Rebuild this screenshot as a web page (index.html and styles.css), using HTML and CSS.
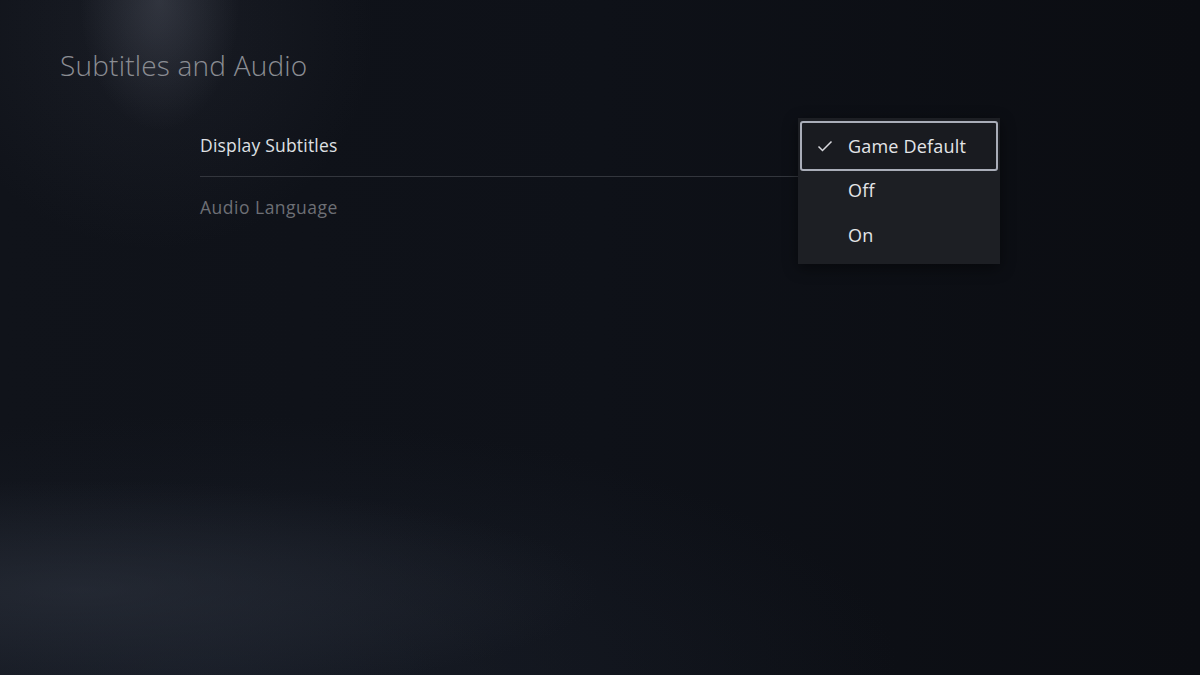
FILE: index.html
```html
<!DOCTYPE html>
<html lang="en">
<head>
    <meta charset="UTF-8">
    <meta name="viewport" content="width=device-width, initial-scale=1.0">
    <title>Subtitles and Audio</title>
    <link rel="stylesheet" href="styles.css">
</head>
<body>
    <div class="screen">
        <h1 class="page-title">Subtitles and Audio</h1>

        <div class="settings-list">
            <div class="setting-row active">
                <span class="setting-label">Display Subtitles</span>
                <div class="dropdown">
                    <div class="option selected">
                        <svg class="check" width="16" height="12" viewBox="0 0 16 12">
                            <path d="M1.5 6.5 L5.5 10.5 L14.5 1.5" fill="none" stroke="#d8d9de" stroke-width="1.5"/>
                        </svg>
                        <span>Game Default</span>
                    </div>
                    <div class="option"><span>Off</span></div>
                    <div class="option"><span>On</span></div>
                </div>
            </div>
            <div class="setting-row">
                <span class="setting-label dim">Audio Language</span>
            </div>
        </div>
    </div>
</body>
</html>
```

FILE: styles.css
```css
html, body {
    margin: 0;
    padding: 0;
    height: 100%;
}

body {
    font-family: "Open Sans", "Noto Sans", sans-serif;
    background-color: #0d1016;
    overflow: hidden;
}

.screen {
    width: 1200px;
    height: 675px;
    box-sizing: border-box;
    padding: 46px 0 0 60px;
    background:
        radial-gradient(ellipse 80px 130px at 160px 0px, rgba(120, 125, 140, 0.26), rgba(120, 125, 140, 0) 100%),
        radial-gradient(ellipse 220px 220px at 155px 30px, rgba(70, 74, 88, 0.18), rgba(70, 74, 88, 0) 100%),
        radial-gradient(ellipse 520px 110px at 80px 590px, rgba(52, 58, 70, 0.45), rgba(52, 58, 70, 0) 100%),
        radial-gradient(ellipse 700px 260px at 200px 675px, rgba(30, 36, 48, 0.6), rgba(30, 36, 48, 0) 100%),
        linear-gradient(90deg, #10131a 0%, #0e1118 50%, #0b0d12 100%);
}

.page-title {
    margin: 0;
    font-size: 28px;
    font-weight: 300;
    color: #8b8d93;
    line-height: 38px;
    letter-spacing: 0.2px;
}

.settings-list {
    margin-top: 36px;
    margin-left: 140px;
    width: 800px;
}

.setting-row {
    display: flex;
    align-items: center;
    height: 60px;
    position: relative;
}

.setting-row.active {
    border-bottom: 1px solid #33363d;
    height: 56px;
}

.setting-label {
    font-size: 17.5px;
    font-weight: 400;
    color: #dfe0e4;
    letter-spacing: 0.2px;
}

.setting-row.active .setting-label {
    padding-bottom: 6px;
}

.setting-label.dim {
    color: #6d6f75;
    letter-spacing: 0.5px;
}

.dropdown {
    position: absolute;
    left: 598px;
    top: -2px;
    width: 202px;
    padding-bottom: 7px;
    background-color: #1d1f24;
    box-shadow: 0 4px 14px rgba(0, 0, 0, 0.45);
}

.option {
    display: flex;
    align-items: center;
    height: 45px;
    padding-left: 50px;
    font-size: 18px;
    color: #e4e5e8;
    box-sizing: border-box;
    letter-spacing: 0.2px;
}

.option.selected {
    position: relative;
    height: 50px;
    margin: 3px 2px -4px 2px;
    padding-left: 46px;
    border: 2px solid #a9adb8;
    border-radius: 3px;
    background-color: #191b20;
    z-index: 1;
}

.check {
    position: absolute;
    left: 15px;
    top: 17px;
}
```
